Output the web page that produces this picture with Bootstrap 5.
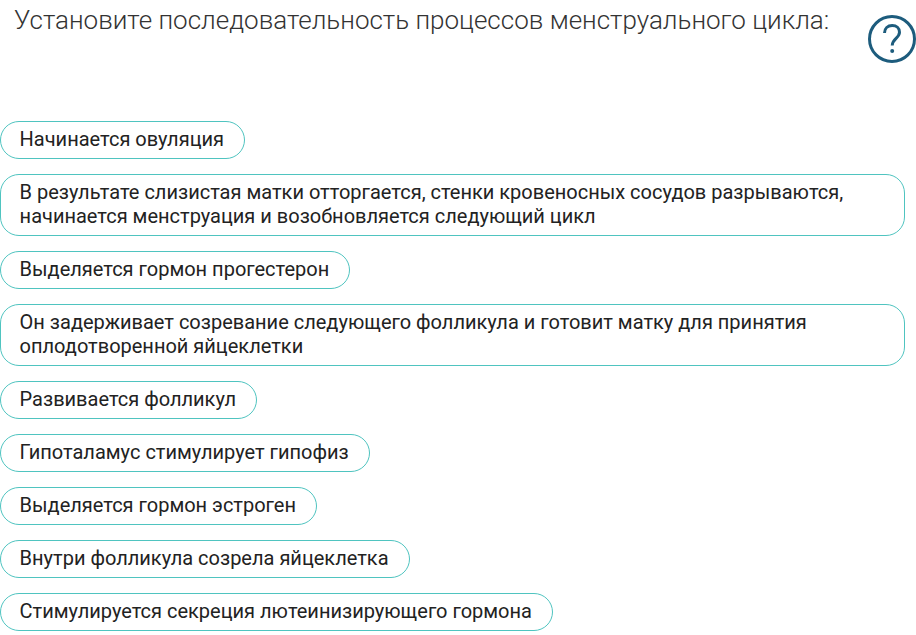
<!DOCTYPE html>
<html lang="ru">
<head>
  <meta charset="UTF-8" />
  <title>Последовательность</title>
  <link href="https://cdn.jsdelivr.net/npm/bootstrap@5.3.0/dist/css/bootstrap.min.css" rel="stylesheet">
  <style>
    body {
      font-family: Roboto, "Liberation Sans", sans-serif;
      background: #fff;
      overflow: hidden;
    }
    .quiz-head {
      height: 121px;
      padding-left: 14px;
    }
    .quiz-title {
      font-size: 26px;
      font-weight: 300;
      line-height: 30px;
      color: #333;
      margin: 5px 0 0;
    }
    .quiz-help {
      width: 48px;
      height: 48px;
      margin-top: 15px;
      flex: none;
    }
    .step-list {
      gap: 15px;
      width: 905px;
    }
    .step-item {
      border: 1px solid #4fc4c0;
      border-radius: 19px;
      padding: 5px 20px 7px 18.6px;
      font-size: 20px;
      line-height: 24px;
      color: #222;
    }
  </style>
</head>
<body class="m-0">
  <div class="quiz-head d-flex justify-content-between">
    <p class="quiz-title">Установите последовательность процессов менструального цикла:</p>
    <svg class="quiz-help" viewBox="0 0 48 48">
      <circle cx="24" cy="24" r="22.5" fill="none" stroke="#1d5c7d" stroke-width="3"/>
      <path d="M16.500 18c0-4.500 3.300-7.500 7.700-7.500 4.300 0 7.300 2.800 7.300 6.700 0 6-7.300 6.300-7.300 13.300" fill="none" stroke="#1d5c7d" stroke-width="3"/>
      <circle cx="24.200" cy="36" r="2" fill="#1d5c7d"/>
    </svg>
  </div>
  <div class="step-list d-flex flex-column align-items-start">
    <div class="step-item">Начинается овуляция</div>
    <div class="step-item w-100">В результате слизистая матки отторгается, стенки кровеносных сосудов разрываются,<br>начинается менструация и возобновляется следующий цикл</div>
    <div class="step-item">Выделяется гормон прогестерон</div>
    <div class="step-item w-100">Он задерживает созревание следующего фолликула и готовит матку для принятия<br>оплодотворенной яйцеклетки</div>
    <div class="step-item">Развивается фолликул</div>
    <div class="step-item">Гипоталамус стимулирует гипофиз</div>
    <div class="step-item">Выделяется гормон эстроген</div>
    <div class="step-item">Внутри фолликула созрела яйцеклетка</div>
    <div class="step-item">Стимулируется секреция лютеинизирующего гормона</div>
  </div>
</body>
</html>
